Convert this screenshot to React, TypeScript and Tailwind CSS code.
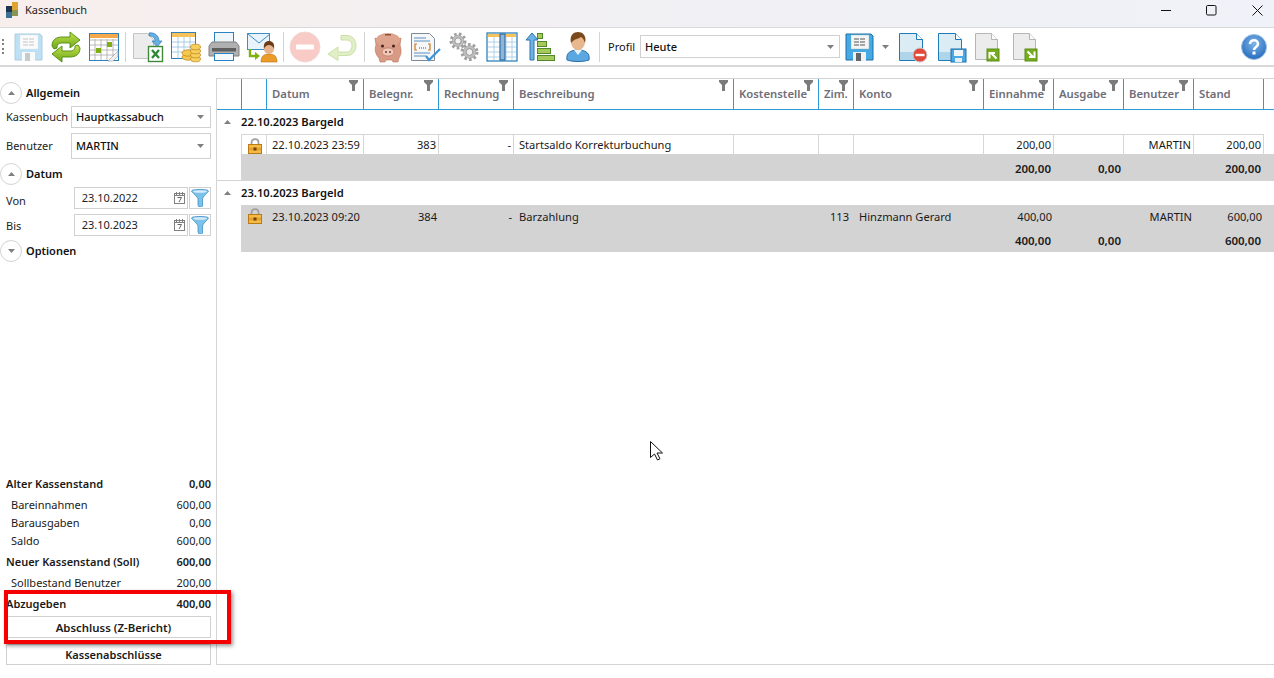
import React from "react";

const FONT = { fontFamily: '"Noto Sans", "Open Sans", sans-serif' };

const Floppy = ({ faded = false }: { faded?: boolean }) => (
  <svg width="32" height="32" viewBox="0 0 32 32" opacity={faded ? 0.35 : 1}>
    <path d="M3 3h25l2 2v24H3z" fill="#45a9e4" stroke="#1c6fa8" />
    <rect x="8" y="4" width="18" height="14" fill="#f4f6f6" stroke="#8bb" strokeWidth=".4" />
    <path d="M11 8h12M11 11h12M11 14h12" stroke="#555" strokeWidth="1" strokeDasharray="5 1" />
    <rect x="10" y="21" width="13" height="9" fill="#eef2f5" />
    <rect x="13" y="22" width="5" height="8" fill="#60666c" />
  </svg>
);

const Refresh = () => (
  <svg width="32" height="32" viewBox="0 0 32 32">
    <defs>
      <linearGradient id="gr" x1="0" y1="0" x2="0" y2="1">
        <stop offset="0" stopColor="#c6e04a" />
        <stop offset="1" stopColor="#6ba81b" />
      </linearGradient>
    </defs>
    <path d="M2 15C2 9 6 6 12 6h8V1l10 8-10 8v-5h-8c-3 0-5 1-5 5l-3 1z" fill="url(#gr)" stroke="#4d8a12" strokeWidth=".9" />
    <path d="M30 17c0 6-4 9-10 9h-8v5L2 23l10-8v5h8c3 0 5-1 5-5l3-1z" fill="url(#gr)" stroke="#4d8a12" strokeWidth=".9" />
  </svg>
);

const Calendar = () => (
  <svg width="32" height="32" viewBox="0 0 32 32">
    <rect x="1.5" y="2.5" width="29" height="27" fill="#fff" stroke="#2d82bd" />
    <rect x="2" y="3" width="28" height="4" fill="#f5a94a" />
    <path d="M2 9h28M2 14h28M2 19h28M2 24h28M7 8v21M13 8v21M19 8v21M25 8v21" stroke="#a9a9a9" strokeWidth=".8" />
    <rect x="8" y="17" width="5" height="5" fill="#7fae12" />
    <rect x="19" y="11" width="5" height="5" fill="#7fae12" />
    <path d="M20 30l10-10v5l-5 5z" fill="#f0f0f0" stroke="#999" strokeWidth=".6" />
  </svg>
);

const ExcelDoc = () => (
  <svg width="32" height="32" viewBox="0 0 32 32">
    <path d="M1.5 2.5h14l6 6v19h-20z" fill="#ececec" stroke="#c4c4c4" />
    <path d="M17 2c6-1 10 3 10 8h3l-5 6-5-6h3c0-3-2-5-6-5z" fill="#68aede" stroke="#2f7ebb" strokeWidth=".7" />
    <rect x="16.5" y="15.5" width="14" height="15" fill="#fff" stroke="#3f8a38" strokeWidth="1.4" />
    <path d="M20 19l7 8M27 19l-7 8" stroke="#2f8a38" strokeWidth="2.4" />
  </svg>
);

const TableCoins = () => (
  <svg width="32" height="32" viewBox="0 0 32 32">
    <rect x="1.5" y="1.5" width="24" height="26" fill="#fff" stroke="#2d82bd" />
    <rect x="2" y="2" width="23" height="4" fill="#f6c25c" />
    <path d="M2 11h23M2 16h23M2 21h23M8 6v21M14 6v21M20 6v21" stroke="#9cc6e2" strokeWidth=".9" />
    {[26, 22].map((y) => (
      <ellipse key={y} cx="18" cy={y} rx="6" ry="3.2" fill="#f6c74f" stroke="#c08a1a" strokeWidth=".8" />
    ))}
    {[28, 24, 20, 16].map((y) => (
      <ellipse key={y} cx="25.5" cy={y} rx="5" ry="2.8" fill="#f7cf5f" stroke="#c08a1a" strokeWidth=".8" />
    ))}
  </svg>
);

const Printer = () => (
  <svg width="32" height="32" viewBox="0 0 32 32">
    <rect x="6.5" y="1.5" width="19" height="12" fill="#eef6fc" stroke="#2d82bd" />
    <path d="M4 11h24l3 4v10H1V15z" fill="#b0b0b0" stroke="#808080" />
    <rect x="4" y="17" width="24" height="3.5" fill="#5f5f5f" />
    <rect x="6.5" y="22.5" width="19" height="7" fill="#f3f9fd" stroke="#2d82bd" />
  </svg>
);

const MailPerson = () => (
  <svg width="32" height="32" viewBox="0 0 32 32">
    <rect x="1.5" y="2.5" width="22" height="16" fill="#e8f3fb" stroke="#3c8fc6" />
    <path d="M2 3l11 9 11-9" fill="none" stroke="#3c8fc6" />
    <path d="M4 18v7h6" fill="none" stroke="#7fb10f" strokeWidth="2.4" />
    <path d="M9 21l5 4-5 4z" fill="#7fb10f" />
    <path d="M15 31c0-6 3-8 8-8s8 2 8 8z" fill="#eb9b27" stroke="#b87210" strokeWidth=".6" />
    <circle cx="23" cy="18" r="5" fill="#e7b58d" />
    <path d="M18 18c-1-6 2-8 5-8s6 2 5 8c-1-3-3-4-5-4s-4 1-5 4z" fill="#6b3c17" />
  </svg>
);

const StopFaded = () => (
  <svg width="32" height="32" viewBox="0 0 32 32">
    <circle cx="16" cy="16" r="15" fill="#f8cbc6" stroke="#f0d8d5" />
    <rect x="7" y="13.5" width="18" height="5" fill="#fff" rx="1" />
  </svg>
);

const UndoFaded = () => (
  <svg width="32" height="32" viewBox="0 0 32 32">
    <path d="M14 1.5h6c5 0 9 4 9 10s-4 10-9 10H11v5L1 20l10-7v5h9c3 0 5-3 5-6.5S23 6 20 6h-6z" transform="translate(0 3)" fill="#e0efc7" stroke="#cde0a6" />
  </svg>
);

const Piggy = () => (
  <svg width="32" height="32" viewBox="0 0 32 32">
    <path d="M3 7l6 2h14l6-2-1 7c2 6 1 10-1 13l-1 4h-5l-1-2h-6l-1 2H8l-1-4C4 24 2 19 4 14z" fill="#d89a84" stroke="#b47560" strokeWidth=".6" />
    <ellipse cx="16" cy="9" rx="12" ry="7" fill="#dfa48d" />
    <rect x="13" y="3" width="6" height="1.5" fill="#8c5240" />
    <circle cx="10.5" cy="15" r="1.5" fill="#43241b" />
    <circle cx="21.5" cy="15" r="1.5" fill="#43241b" />
    <ellipse cx="16" cy="21" rx="6" ry="4" fill="#f2c8b8" stroke="#b47560" strokeWidth=".6" />
    <circle cx="14" cy="21" r="1" fill="#6a3d30" />
    <circle cx="18" cy="21" r="1" fill="#6a3d30" />
  </svg>
);

const DocCheck = () => (
  <svg width="32" height="32" viewBox="0 0 32 32">
    <path d="M1.5 2.5h18l5 5v22h-23z" fill="#f5f7f9" stroke="#7d8b99" />
    <path d="M4 7h12M4 10h16M4 22h16M4 25h12" stroke="#5a90c0" strokeWidth="1" />
    <path d="M7 13h-2v6h2M18 13h2v6h-2" fill="none" stroke="#c9781c" strokeWidth="1.2" />
    <path d="M9 17h7" stroke="#555" strokeDasharray="1 1" strokeWidth="1.2" />
    <path d="M16 25l3 4 11-11" fill="none" stroke="#3d94d6" strokeWidth="2.2" />
  </svg>
);

const Gear = ({ cx, cy, r }: { cx: number; cy: number; r: number }) => (
  <g>
    <circle cx={cx} cy={cy} r={r} fill="none" stroke="#a0a0a0" strokeWidth="3" strokeDasharray="2.6 2.2" />
    <circle cx={cx} cy={cy} r={r - 1.2} fill="#c0c0c0" stroke="#959595" strokeWidth=".6" />
    <circle cx={cx} cy={cy} r={r * 0.45} fill="#f2f2f2" stroke="#858585" strokeWidth=".8" />
  </g>
);

const Gears = () => (
  <svg width="32" height="32" viewBox="0 0 32 32">
    <Gear cx={10} cy={10} r={7} />
    <Gear cx={21.5} cy={21} r={7.5} />
  </svg>
);

const Columns = () => (
  <svg width="32" height="32" viewBox="0 0 32 32">
    <rect x="1" y="2" width="30" height="28" fill="#fff" stroke="#1f78b4" strokeWidth="1.2" />
    <rect x="2" y="3" width="28" height="3" fill="#f6c25c" />
    <path d="M2 11h28M2 16h28M2 21h28M2 26h28M8 6v23M14 6v23M20 6v23M26 6v23" stroke="#a8cde6" strokeWidth=".9" />
    <rect x="14" y="3" width="5" height="26" fill="#8fb5d9" stroke="#1f5f98" />
  </svg>
);

const SortIcon = () => (
  <svg width="32" height="32" viewBox="0 0 32 32">
    <path d="M6 29V9H2l6-7 6 7h-4v20z" fill="#6fb3e6" stroke="#2a75b0" />
    <rect x="13.5" y="2.5" width="5" height="5" fill="#a7c95a" stroke="#4f8a2a" />
    <rect x="13.5" y="10.5" width="9" height="5" fill="#a7c95a" stroke="#4f8a2a" />
    <rect x="13.5" y="17.5" width="13" height="5" fill="#a7c95a" stroke="#4f8a2a" />
    <rect x="13.5" y="24.5" width="17" height="5" fill="#a7c95a" stroke="#4f8a2a" />
  </svg>
);

const PersonBlue = () => (
  <svg width="32" height="32" viewBox="0 0 32 32">
    <path d="M5 29c-1-6 2-10 11-10s12 4 11 10c-6 2-16 2-22 0z" fill="#5ba7e2" stroke="#2a6fa8" />
    <path d="M12 19l4 5 4-5z" fill="#e6f2fb" />
    <ellipse cx="16" cy="11" rx="7" ry="8" fill="#e9b78e" />
    <path d="M9 12C7 4 12 1 16 1s9 3 7 11c-1-3-2-5-4-6-3 2-7 2-10 6z" fill="#7a4a1c" />
  </svg>
);

const BlueDoc = ({ children }: { children?: React.ReactNode }) => (
  <svg width="32" height="32" viewBox="0 0 32 32">
    <path d="M3.5 2.5h17l6 6v21h-23z" fill="#dcecf5" stroke="#1f7ab8" />
    <path d="M20.5 2.5v6h6" fill="#fff" stroke="#1f7ab8" />
    <rect x="4" y="21" width="22" height="8" fill="#aed5ea" />
    {children}
  </svg>
);

const DocStop = () => (
  <BlueDoc>
    <circle cx="24" cy="24" r="7" fill="#e2483a" stroke="#c8c8c8" />
    <rect x="19.5" y="22.8" width="9" height="2.4" fill="#fff" />
  </BlueDoc>
);

const DocSave = () => (
  <BlueDoc>
    <rect x="16" y="18" width="15" height="13" fill="#4aa9e4" stroke="#1c6fa8" />
    <rect x="19" y="19" width="9" height="6" fill="#f2f5f7" />
    <rect x="20" y="27" width="7" height="4" fill="#e8eef2" />
  </BlueDoc>
);

const DocArrow = ({ se = false }: { se?: boolean }) => (
  <svg width="32" height="32" viewBox="0 0 32 32">
    <path d="M2.5 2.5h16l6 6v20h-22z" fill="#ececec" stroke="#b5b5b5" />
    <path d="M18.5 2.5v6h6" fill="#fafafa" stroke="#b5b5b5" />
    <rect x="14" y="18" width="12" height="12" fill="#76ac1e" stroke="#5a8e18" />
    {se ? (
      <path d="M16.5 20.5l5 5M23.5 20.5V26H18" fill="none" stroke="#fff" strokeWidth="2" />
    ) : (
      <path d="M23.5 27.5l-5-5M16.5 27.5V22H22" fill="none" stroke="#fff" strokeWidth="2" />
    )}
  </svg>
);

const Help = () => (
  <svg width="28" height="28" viewBox="0 0 28 28">
    <defs>
      <radialGradient id="hb" cx=".5" cy=".35" r=".7">
        <stop offset="0" stopColor="#7fb4ea" />
        <stop offset="1" stopColor="#1f66b8" />
      </radialGradient>
    </defs>
    <circle cx="14" cy="14" r="12.5" fill="url(#hb)" stroke="#9dbfe3" />
    <path d="M10 11c0-5 8-5 8 0 0 3-4 3-4 6" fill="none" stroke="#fff" strokeWidth="2.6" />
    <rect x="12.5" y="18.5" width="3" height="3" fill="#fff" />
  </svg>
);

const Funnel = () => (
  <svg width="9" height="11" viewBox="0 0 9 11">
    <path d="M0 0h9v2L6 5v6H3V5L0 2z" fill="#7b7b7b" />
  </svg>
);

const BlueFunnel = () => (
  <svg width="18" height="18" viewBox="0 0 18 18">
    <path d="M.5 2c0-2 17-2 17 0 0 1-6 6-6 8v7l-1 1H8l-1-2v-6C7 8 .5 3 .5 2z" fill="#7cc1ea" stroke="#3f8fc6" strokeWidth=".8" />
    <ellipse cx="9" cy="2.5" rx="7" ry="1.3" fill="#d7ecf8" />
  </svg>
);

const Lock = () => (
  <svg width="14" height="16" viewBox="0 0 14 16">
    <path d="M3.5 8V4.5c0-4.500 7-4.500 7 0V8" fill="none" stroke="#a0a0a0" strokeWidth="1.8" />
    <rect x=".5" y="6.5" width="13" height="9" fill="#f6bb45" stroke="#b97a16" />
    <rect x="1" y="9.5" width="12" height="3" fill="#e9a12d" />
    <rect x="5.5" y="9.5" width="3" height="3" fill="#6c4511" />
  </svg>
);

const CalMini = () => (
  <svg width="11" height="12" viewBox="0 0 11 12">
    <rect x=".5" y="1.5" width="10" height="10" fill="none" stroke="#808080" />
    <path d="M2.5 0v3M5.5 0v3M8.5 0v3M1 3.500h9" stroke="#808080" />
    <path d="M3.5 5.5h4L5 10" fill="none" stroke="#666" />
  </svg>
);

const DownTri = () => (
  <svg width="7" height="4" viewBox="0 0 7 4">
    <path d="M0 0h7L3.5 4z" fill="#7f7f7f" />
  </svg>
);

const UpTri = () => (
  <svg width="7" height="4" viewBox="0 0 7 4">
    <path d="M0 4h7L3.5 0z" fill="#7f7f7f" />
  </svg>
);

const Btn = ({ children }: { children: React.ReactNode }) => (
  <div className="flex h-[38px] w-[38px] shrink-0 items-center justify-center">{children}</div>
);

const Sep = () => <div className="mx-[2px] h-[30px] w-px shrink-0 bg-[#d4d4d4]" />;

const Toolbar = () => (
  <div className="relative flex h-[39px] shrink-0 items-center border-b-2 border-[#d9d9d9] bg-white pr-[6px]">
    <div className="ml-[2px] mr-[5px] flex h-[16px] w-[2px] flex-col justify-between">
      <div className="h-[2px] w-[2px] bg-[#808080]" />
      <div className="h-[2px] w-[2px] bg-[#808080]" />
      <div className="h-[2px] w-[2px] bg-[#808080]" />
      <div className="h-[2px] w-[2px] bg-[#808080]" />
    </div>
    <Btn><Floppy faded /></Btn>
    <Btn><Refresh /></Btn>
    <Btn><Calendar /></Btn>
    <Sep />
    <div className="w-px" />
    <Btn><ExcelDoc /></Btn>
    <Btn><TableCoins /></Btn>
    <Btn><Printer /></Btn>
    <Btn><MailPerson /></Btn>
    <Sep />
    <Btn><StopFaded /></Btn>
    <Btn><UndoFaded /></Btn>
    <Sep />
    <div className="w-[2px]" />
    <Btn><Piggy /></Btn>
    <Btn><DocCheck /></Btn>
    <Btn><Gears /></Btn>
    <Btn><Columns /></Btn>
    <Btn><SortIcon /></Btn>
    <Btn><PersonBlue /></Btn>
    <Sep />
    <span className="ml-[6px] w-[32px] pt-px text-[11px] text-[#111]">Profil</span>
    <div className="flex h-[23px] w-[200px] items-center justify-between border border-[#d0d0d0] pl-[4px] pr-[5px]">
      <span className="pt-px text-[11px] font-medium text-[#111]">Heute</span>
      <DownTri />
    </div>
    <div className="ml-[2px] flex w-[34px] items-center justify-center"><Floppy /></div>
    <div className="ml-[6px] mr-[3px] flex w-[7px] justify-center"><DownTri /></div>
    <div className="flex w-[39px] justify-center"><DocStop /></div>
    <div className="flex w-[39px] justify-center"><DocSave /></div>
    <div className="flex w-[38px] justify-center"><DocArrow /></div>
    <div className="flex w-[38px] justify-center"><DocArrow se /></div>
    <div className="ml-auto flex items-center"><Help /></div>
  </div>
);

const Section = ({ label, open = true, className = "" }: { label: string; open?: boolean; className?: string }) => (
  <div className={`flex h-[22px] items-center ${className}`}>
    <div className="flex h-[22px] w-[22px] items-center justify-center rounded-full border border-[#d4d4d4] bg-white">
      {open ? <UpTri /> : <DownTri />}
    </div>
    <span className="ml-[4px] pt-px text-[11px] font-semibold text-[#111]">{label}</span>
  </div>
);

const Combo = ({ label, value, className = "" }: { label: string; value: string; className?: string }) => (
  <div className={`flex items-center pl-[6px] pr-[5px] ${className}`}>
    <span className="w-[65px] pt-px text-[11px] text-[#222]">{label}</span>
    <div className="flex h-full flex-1 items-center justify-between border border-[#d0d0d0] pl-[4px] pr-[6px]">
      <span className="pt-px text-[11px] font-medium text-[#111]">{value}</span>
      <DownTri />
    </div>
  </div>
);

const DateRow = ({ label, value, className = "", labelClass = "" }: { label: string; value: string; className?: string; labelClass?: string }) => (
  <div className={`flex h-[22px] items-center pl-[6px] pr-[5px] ${className}`}>
    <span className={`w-[68px] text-[11px] text-[#222] ${labelClass}`}>{label}</span>
    <div className="flex h-full w-[115px] items-center justify-between border border-[#d0d0d0] pl-[7px] pr-[2px]">
      <span className="pt-px text-[11px] text-[#222]">{value}</span>
      <CalMini />
    </div>
    <div className="ml-px flex h-full w-[22px] items-center justify-center border border-[#d0d0d0]">
      <BlueFunnel />
    </div>
  </div>
);

const Sum = ({ label, value, bold = false, className = "" }: { label: string; value: string; bold?: boolean; className?: string }) => (
  <div
    className={`flex h-[18px] items-center justify-between pr-[5px] text-[11px] text-[#1a1a1a] ${bold ? "pl-[6px] font-semibold" : "pl-[11px]"} ${className}`}
  >
    <span>{label}</span>
    <span>{value}</span>
  </div>
);

const Sidebar = () => (
  <aside className="flex w-[216px] shrink-0 flex-col pt-[15px]">
    <Section label="Allgemein" />
    <Combo label="Kassenbuch" value="Hauptkassabuch" className="mt-[2px] h-[22px]" />
    <Combo label="Benutzer" value="MARTIN" className="mt-[5px] h-[26px]" />
    <Section label="Datum" className="mt-[4px]" />
    <DateRow label="Von" value="23.10.2022" className="mt-[2px]" labelClass="pt-[6px]" />
    <DateRow label="Bis" value="23.10.2023" className="mt-[5px]" labelClass="pt-[2px]" />
    <Section label="Optionen" open={false} className="mt-[4px]" />
    <div className="mt-auto flex flex-col">
      <Sum label="Alter Kassenstand" value="0,00" bold />
      <Sum label="Bareinnahmen" value="600,00" className="mt-[3px]" />
      <Sum label="Barausgaben" value="0,00" />
      <Sum label="Saldo" value="600,00" />
      <Sum label="Neuer Kassenstand (Soll)" value="600,00" bold className="mt-[3px]" />
      <Sum label="Sollbestand Benutzer" value="200,00" className="mt-[3px]" />
      <Sum label="Abzugeben" value="400,00" bold className="mt-[3px]" />
      <div className="ml-[6px] mr-[5px] mt-[3px] flex h-[22px] items-center justify-center border border-[#d0d0d0] pl-[10px] pt-px text-[11.4px] font-semibold text-[#1a1a1a]">
        Abschluss (Z-Bericht)
      </div>
      <div className="ml-[6px] mr-[5px] mt-[6px] flex h-[21px] items-center justify-center border border-[#d0d0d0] pl-[10px] pt-px text-[11px] font-semibold text-[#1a1a1a]">
        Kassenabschlüsse
      </div>
    </div>
  </aside>
);

const GRID_WHITE = "grid grid-cols-[25px_25px_97px_75px_75px_220px_85px_35px_130px_70px_70px_70px_70px]";
const GRID_SEL = "grid grid-cols-[24px_26px_97px_75px_75px_220px_85px_35px_130px_70px_70px_70px_70px]";

const headers: { t: string; f?: boolean }[] = [
  { t: "" },
  { t: "" },
  { t: "Datum", f: true },
  { t: "Belegnr.", f: true },
  { t: "Rechnung", f: true },
  { t: "Beschreibung", f: true },
  { t: "Kostenstelle", f: true },
  { t: "Zim.", f: true },
  { t: "Konto", f: true },
  { t: "Einnahme", f: true },
  { t: "Ausgabe", f: true },
  { t: "Benutzer", f: true },
  { t: "Stand" },
];

const Header = () => (
  <div className={`${GRID_WHITE} h-[31px] border-b border-[#2f9ad6]`}>
    {headers.map((h, i) => (
      <div
        key={i}
        className="relative flex items-end overflow-hidden whitespace-nowrap border-r border-[#2f9ad6] pb-[6px] pl-[5px] text-[11.3px] font-semibold text-[#6e6e78]"
      >
        {h.t}
        {h.f && (
          <div className="absolute right-[5px] top-px">
            <Funnel />
          </div>
        )}
      </div>
    ))}
  </div>
);

type Cell = { t?: string; right?: boolean; lock?: boolean; pr5?: boolean };

const Row = ({ cells, selected }: { cells: Cell[]; selected: boolean }) => (
  <div className={selected ? `${GRID_SEL} h-[21px] bg-[#d4d3d4]` : `${GRID_WHITE} h-[20px]`}>
    {cells.map((c, i) => (
      <div
        key={i}
        className={`flex items-center whitespace-nowrap pl-[5px] text-[11.1px] text-[#1a1a1a] ${selected ? "pt-[3px]" : "pt-[2px]"} ${
          i === 0
            ? selected
              ? "bg-white"
              : "border-r border-[#d6d6d6]"
            : selected
              ? ""
              : "border-r border-t border-[#d6d6d6] bg-white"
        } ${i === 1 ? "items-start justify-center !pl-[2px] !pt-[3px]" : ""} ${c.right ? "justify-end" : ""} ${c.right ? (c.pr5 ? "pr-[5px]" : "pr-[2px]") : ""}`}
      >
        {c.lock ? <Lock /> : c.t}
      </div>
    ))}
  </div>
);

const Summary = ({ a, b, c }: { a: string; b: string; c: string }) => (
  <div className="ml-[24px] grid h-[26px] grid-cols-[26px_97px_75px_75px_220px_85px_35px_130px_70px_70px_70px_70px] items-center bg-[#d4d3d4] pt-[3px] text-[11.5px] font-semibold text-[#1a1a1a]">
    <div className="col-start-9 pr-[3px] text-right">{a}</div>
    <div className="pr-[3px] text-right">{b}</div>
    <div />
    <div className="pr-[3px] text-right">{c}</div>
  </div>
);

const GroupHead = ({ t }: { t: string }) => (
  <div className="flex h-[24px] items-center">
    <div className="flex w-[24px] justify-center pr-[3px]">
      <UpTri />
    </div>
    <span className="pt-px text-[11.2px] font-semibold text-[#111]">{t}</span>
  </div>
);

const mkRow = (d: string, n: string, desc: string, z: string, k: string, e: string, st: string): Cell[] => [
  {},
  { lock: true },
  { t: d },
  { t: n, right: true },
  { t: "-", right: true },
  { t: desc },
  {},
  { t: z, right: true, pr5: true },
  { t: k },
  { t: e, right: true },
  {},
  { t: "MARTIN", right: true },
  { t: st, right: true },
];

const Grid = () => (
  <main className="mt-[11px] flex w-[1058px] flex-col border-y border-l border-[#d4d4d4]">
    <Header />
    <GroupHead t="22.10.2023 Bargeld" />
    <Row selected={false} cells={mkRow("22.10.2023 23:59", "383", "Startsaldo Korrekturbuchung", "", "", "200,00", "200,00")} />
    <Summary a="200,00" b="0,00" c="200,00" />
    <div className="h-px bg-[#d4d4d4]" />
    <GroupHead t="23.10.2023 Bargeld" />
    <Row selected cells={mkRow("23.10.2023 09:20", "384", "Barzahlung", "113", "Hinzmann Gerard", "400,00", "600,00")} />
    <Summary a="400,00" b="0,00" c="600,00" />
  </main>
);

export default function App() {
  return (
    <div className="relative flex h-[678px] w-[1274px] flex-col overflow-hidden bg-white" style={FONT}>
      <div className="flex h-[28px] shrink-0 items-start border-b border-[#d9d9d9] bg-gradient-to-r from-[#f8efed] via-[#f1f0f3] to-[#eff2f8] pt-[2px]">
        <svg width="13" height="16" viewBox="0 0 13 16" className="ml-[6px]">
          <rect x="0" y="4" width="6" height="6" fill="#1f3550" />
          <rect x="6" y="0" width="6" height="8" fill="#dda52f" />
          <rect x="0" y="10" width="6" height="6" fill="#3e6f94" />
          <rect x="6" y="8" width="6" height="6" fill="#8a9554" />
        </svg>
        <span className="ml-[6px] text-[11px] leading-[16px] text-[#222]">Kassenbuch</span>
        <div className="ml-auto mt-[3px] flex items-center">
          <svg width="11" height="11" viewBox="0 0 11 11" className="mr-[34px]">
            <path d="M0 5.5h10" stroke="#111" />
          </svg>
          <svg width="11" height="11" viewBox="0 0 11 11" className="mr-[35px]">
            <rect x=".5" y=".5" width="9.5" height="9.5" rx="1.2" fill="none" stroke="#111" />
          </svg>
          <svg width="11" height="11" viewBox="0 0 11 11" className="mr-[11px]">
            <path d="M.5.5l10 10M10.5.5l-10 10" stroke="#111" />
          </svg>
        </div>
      </div>
      <Toolbar />
      <div className="flex min-h-0 flex-1 pb-[13px]">
        <Sidebar />
        <Grid />
      </div>
      <div className="absolute left-[4px] top-[590px] h-[54px] w-[227px] border-[4px] border-[#f40000] shadow-[2px_2px_4px_rgba(0,0,0,0.4)]" />
      <svg width="14" height="20" viewBox="0 0 14 20" className="absolute left-[650px] top-[441px]">
        <path d="M.5.5v16l4-3.5 3 6 2.5-1.2-3-5.8h5.5z" fill="#fff" stroke="#111" />
      </svg>
    </div>
  );
}
